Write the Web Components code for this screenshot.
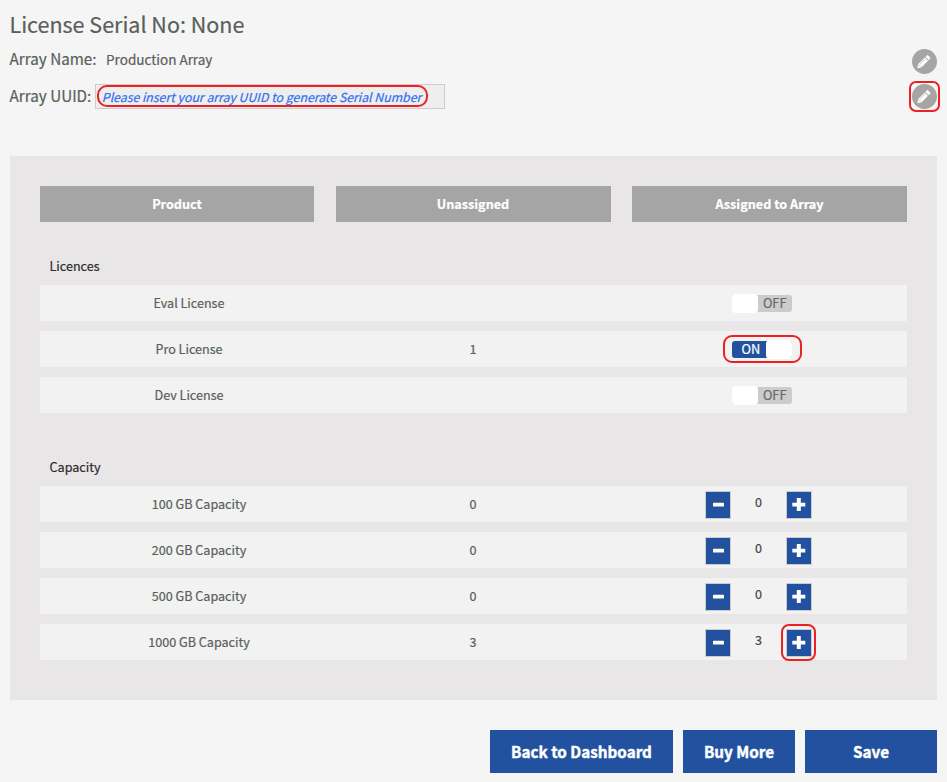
<!DOCTYPE html>
<html lang="en">
<head>
<meta charset="utf-8">
<title>License Assignment</title>
<style>
html,body{margin:0;height:100%;background:#f5f5f5}
body{font-family:"Noto Sans CJK SC","Source Sans Pro",sans-serif;color:#59605a;overflow:hidden;-webkit-text-stroke:.2px}
</style>
</head>
<body>
<license-page></license-page>
<script>
const define = (name, html, setup) => {
  const template = document.createElement('template');
  template.innerHTML = html;
  customElements.define(name, class extends HTMLElement {
    constructor() {
      super();
      this.attachShadow({ mode: 'open' }).append(template.content.cloneNode(true));
    }
    connectedCallback() { if (setup) setup(this, this.shadowRoot); }
  });
};

define('edit-button', `
<style>
:host{display:block;position:relative;width:25px;height:25px}
svg{display:block}
.mark{display:none;position:absolute;left:-3px;top:-3px;width:27px;height:27px;border:2px solid #ed2024;border-radius:7px}
:host([marked]) .mark{display:block}
</style>
<svg width="25" height="25" viewBox="0 0 25 25">
  <circle cx="12.5" cy="12.5" r="12.5" fill="#a5a5a5"/>
  <g transform="translate(-.6 .2)">
  <path d="M6.2 18.8 L7 14.9 L13.4 8.5 L16.5 11.6 L10.1 18 Z M14.2 7.7 L15.5 6.4 Q16.1 5.9 16.7 6.4 L18.6 8.3 Q19.1 8.9 18.6 9.5 L17.3 10.8 Z" fill="#fff" stroke="#fff" stroke-width=".3"/>
  <path d="M8.8 14.6 L13.3 10.1" stroke="#b5b5b5" stroke-width=".7"/>
  <path d="M7.6 15.6 L9.4 17.4" stroke="#a5a5a5" stroke-width=".8"/>
  </g>
</svg><div class="mark"></div>`);

define('info-line', `
<style>
:host{display:flex;align-items:flex-start;height:25px;font-size:13.5px;line-height:26px;white-space:nowrap}
.label{font-size:15.25px;line-height:25px;margin-left:-.5px}
.value{flex:1;display:flex;align-items:flex-start}
</style>
<span class="label"><slot name="label"></slot></span>
<span class="value"><slot></slot></span>
<slot name="action"></slot>`);

define('uuid-field', `
<style>
:host{display:block;position:relative;box-sizing:border-box;width:350px;height:25px;border:1px solid #ccc;background:#eee;color:#2e6fee;font-size:12.3px;font-style:italic;line-height:24px;padding-left:5.5px}
.mark{position:absolute;left:1px;top:0;width:327px;height:18px;border:2px solid #ed2024;border-radius:10px}
</style>
<slot></slot><div class="mark"></div>`);

define('column-title', `
<style>
:host{display:block;background:#a5a5a5;color:#fff;text-align:center;font-weight:700;font-size:12.65px;line-height:36px;height:36px}
</style><slot></slot>`);

define('product-group', `
<style>
:host{display:block}
h2{margin:0 0 0 9.5px;font-size:12.6px;font-weight:400;line-height:20px;height:29px;color:#2b2b2b}
.rows{display:grid;gap:10px}
</style>
<h2></h2><div class="rows"><slot></slot></div>`,
(el, root) => { root.querySelector('h2').textContent = el.getAttribute('heading'); });

define('product-row', `
<style>
:host{display:grid;grid-template-columns:274px 275px 275px;column-gap:21.5px;height:36px;background:#f2f2f2;font-size:12.6px;line-height:36px;text-align:center}
.name{padding-left:var(--name-shift,24px)}
</style>
<div class="name"><slot name="name"></slot></div>
<div><slot name="free"></slot></div>
<div><slot></slot></div>`);

define('toggle-switch', `
<style>
:host{display:block;position:relative;width:60px;height:19px;margin:9px 0 0 99.5px;line-height:16px;font-size:12.8px}
.track{display:flex;box-sizing:border-box;height:17px;position:relative;top:1px;border-radius:3px;background:#ccc;color:#666b66;justify-content:flex-end;padding-right:5px}
.knob{position:absolute;left:0;top:0;width:26px;height:19px;border-radius:4px;background:#fff}
.mark{display:none;position:absolute;left:-9px;top:-5px;width:75px;height:24px;border:2px solid #ed2024;border-radius:9px}
:host([on]) .track{background:#22529f;color:#fff;justify-content:flex-start;padding-left:10px}
:host([on]) .knob{left:34px}
:host([marked]) .mark{display:block}
</style>
<div class="track"><span></span></div><div class="knob"></div><div class="mark"></div>`,
(el, root) => { root.querySelector('span').textContent = el.hasAttribute('on') ? 'ON' : 'OFF'; });

define('step-button', `
<style>
:host{display:block;position:relative;box-sizing:border-box;width:26px;height:28px;border:1px solid #ccc;background:#22529f}
svg{display:block}
.mark{display:none;position:absolute;left:-6px;top:-6px;width:31px;height:33px;border:2px solid #ed2024;border-radius:8px}
:host([marked]) .mark{display:block}
.v{display:none}
:host([plus]) .v{display:block}
:host([plus]) .m{display:none}
</style>
<svg width="24" height="26" viewBox="0 0 24 26" fill="#fff"><rect class="m" x="7" y="10.7" width="11" height="3.8" rx=".6"/><path class="v" d="M5.3 10.7H9.8V6H13.8V10.7H18.3V14.5H13.8V19H9.8V14.5H5.3Z"/></svg><div class="mark"></div>`);

define('quantity-stepper', `
<style>
:host{display:flex;margin-left:73px;padding-top:5px;height:28px}
.count{width:55px;line-height:22px;text-align:center;color:#454545}
</style>
<step-button></step-button><span class="count"><slot></slot></span><step-button plus></step-button>`,
(el, root) => { if (el.hasAttribute('marked')) root.querySelector('[plus]').setAttribute('marked', ''); });

define('action-button', `
<style>
:host{display:block;height:43px;background:#22529f;color:#fff;font-weight:700;font-size:15.25px;line-height:43px;text-align:center;white-space:nowrap;-webkit-text-stroke:.4px}
</style><slot></slot>`);

define('license-page', `
<style>
:host{display:block;box-sizing:border-box;height:782px;padding:9px 10px 9px}
h1{margin:0 0 0 -.5px;font-size:21.5px;font-weight:400;line-height:30px;height:37px}
.info{height:110px}
.info info-line + info-line{margin-top:12px}
.name{padding-left:9.5px}
uuid-field{margin:1px 0 0 4px}
edit-button{margin-top:3px}
edit-button[marked]{margin-top:1px}
.panel{box-sizing:border-box;height:544px;background:#e8e6e6;padding:30px}
.titles{display:grid;grid-template-columns:274px 275px 275px;column-gap:21.5px;margin-bottom:34px}
.capacity{margin-top:44px;--name-shift:44px}
.actions{display:grid;grid-template-columns:183px 112px 132px;gap:10px;justify-content:end;margin-top:30px}
</style>
<h1>License Serial No: None</h1>
<div class="info">
  <info-line><span slot="label">Array Name:</span><span class="name">Production Array</span><edit-button slot="action"></edit-button></info-line>
  <info-line><span slot="label">Array UUID:</span><uuid-field>Please insert your array UUID to generate Serial Number</uuid-field><edit-button slot="action" marked></edit-button></info-line>
</div>
<div class="panel">
  <div class="titles"><column-title>Product</column-title><column-title>Unassigned</column-title><column-title>Assigned to Array</column-title></div>
  <product-group heading="Licences">
    <product-row><span slot="name">Eval License</span><toggle-switch></toggle-switch></product-row>
    <product-row><span slot="name">Pro License</span><span slot="free">1</span><toggle-switch on marked></toggle-switch></product-row>
    <product-row><span slot="name">Dev License</span><toggle-switch></toggle-switch></product-row>
  </product-group>
  <product-group class="capacity" heading="Capacity">
    <product-row><span slot="name">100 GB Capacity</span><span slot="free">0</span><quantity-stepper>0</quantity-stepper></product-row>
    <product-row><span slot="name">200 GB Capacity</span><span slot="free">0</span><quantity-stepper>0</quantity-stepper></product-row>
    <product-row><span slot="name">500 GB Capacity</span><span slot="free">0</span><quantity-stepper>0</quantity-stepper></product-row>
    <product-row><span slot="name">1000 GB Capacity</span><span slot="free">3</span><quantity-stepper marked>3</quantity-stepper></product-row>
  </product-group>
</div>
<div class="actions"><action-button>Back to Dashboard</action-button><action-button>Buy More</action-button><action-button>Save</action-button></div>`);
</script>
</body>
</html>
